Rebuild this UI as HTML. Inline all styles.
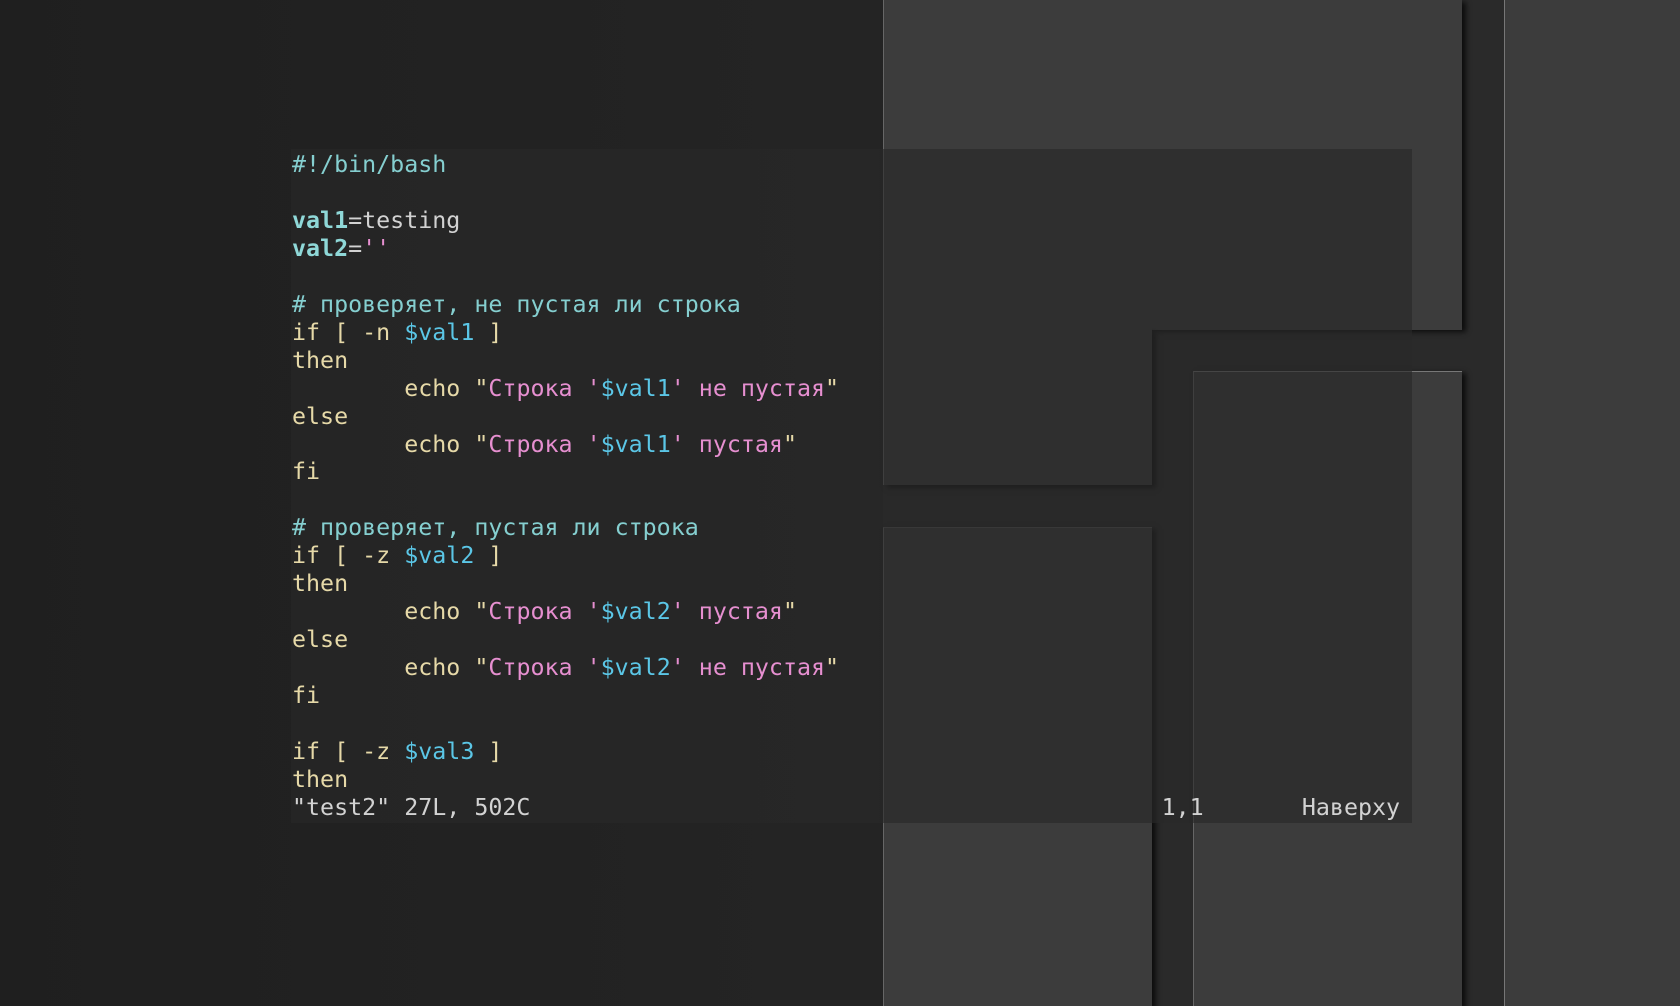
<!DOCTYPE html>
<html><head><meta charset="utf-8"><style>
html,body{margin:0;padding:0;width:1680px;height:1006px;overflow:hidden;background:linear-gradient(90deg,#1f1f1f 0%,#222 30%,#242424 50%,#262626 100%);position:relative;font-family:"DejaVu Sans Mono","Liberation Mono",monospace;}
.p{position:absolute;background:#3c3c3c;}
.sh{box-shadow:4px 2px 5px rgba(0,0,0,.7);}
#term{position:absolute;left:291px;top:149px;width:1121px;height:674px;background:rgba(40,40,40,.64);}
pre{margin:0;font-family:"DejaVu Sans Mono","Liberation Mono",monospace;font-size:23.3px;line-height:27.95px;color:#d2d2d2;position:absolute;left:292px;top:151px;}
.c{color:#85cfd0}.b{color:#8fd8d8;font-weight:bold}.k{color:#e6d9a8}.s{color:#e68fd0}.v{color:#5bc6e6}
</style></head><body>
<div style="position:absolute;left:883px;top:0;width:621px;height:1006px;background:#2a2a2a"></div>
<div class="p sh" style="left:883px;top:0;width:578px;height:330px;border-left:1px solid #666"></div>
<div class="p sh" style="left:883px;top:329px;width:268px;height:156px;border-left:1px solid #666;box-shadow:4px 3px 5px rgba(0,0,0,.7)"></div>
<div class="p" style="left:884px;top:320px;width:268px;height:14px"></div>
<div class="p sh" style="left:883px;top:527px;width:268px;height:479px;border-left:1px solid #666;border-top:1px solid #555"></div>
<div class="p sh" style="left:1193px;top:371px;width:268px;height:635px;border-left:1px solid #666;border-top:1px solid #777"></div>
<div class="p" style="left:1504px;top:0;width:176px;height:1006px;border-left:1px solid #777"></div>
<div id="term"></div>
<pre><span class="c">#!/bin/bash</span>

<span class="b">val1</span>=testing
<span class="b">val2</span>=<span class="s">''</span>

<span class="c"># проверяет, не пустая ли строка</span>
<span class="k">if [ -n </span><span class="v">$val1</span><span class="k"> ]</span>
<span class="k">then</span>
        <span class="k">echo</span> <span class="k">"</span><span class="s">Строка '</span><span class="v">$val1</span><span class="s">' не пустая</span><span class="k">"</span>
<span class="k">else</span>
        <span class="k">echo</span> <span class="k">"</span><span class="s">Строка '</span><span class="v">$val1</span><span class="s">' пустая</span><span class="k">"</span>
<span class="k">fi</span>

<span class="c"># проверяет, пустая ли строка</span>
<span class="k">if [ -z </span><span class="v">$val2</span><span class="k"> ]</span>
<span class="k">then</span>
        <span class="k">echo</span> <span class="k">"</span><span class="s">Строка '</span><span class="v">$val2</span><span class="s">' пустая</span><span class="k">"</span>
<span class="k">else</span>
        <span class="k">echo</span> <span class="k">"</span><span class="s">Строка '</span><span class="v">$val2</span><span class="s">' не пустая</span><span class="k">"</span>
<span class="k">fi</span>

<span class="k">if [ -z </span><span class="v">$val3</span><span class="k"> ]</span>
<span class="k">then</span>
"test2" 27L, 502C                                             1,1       Наверху</pre>
</body></html>
